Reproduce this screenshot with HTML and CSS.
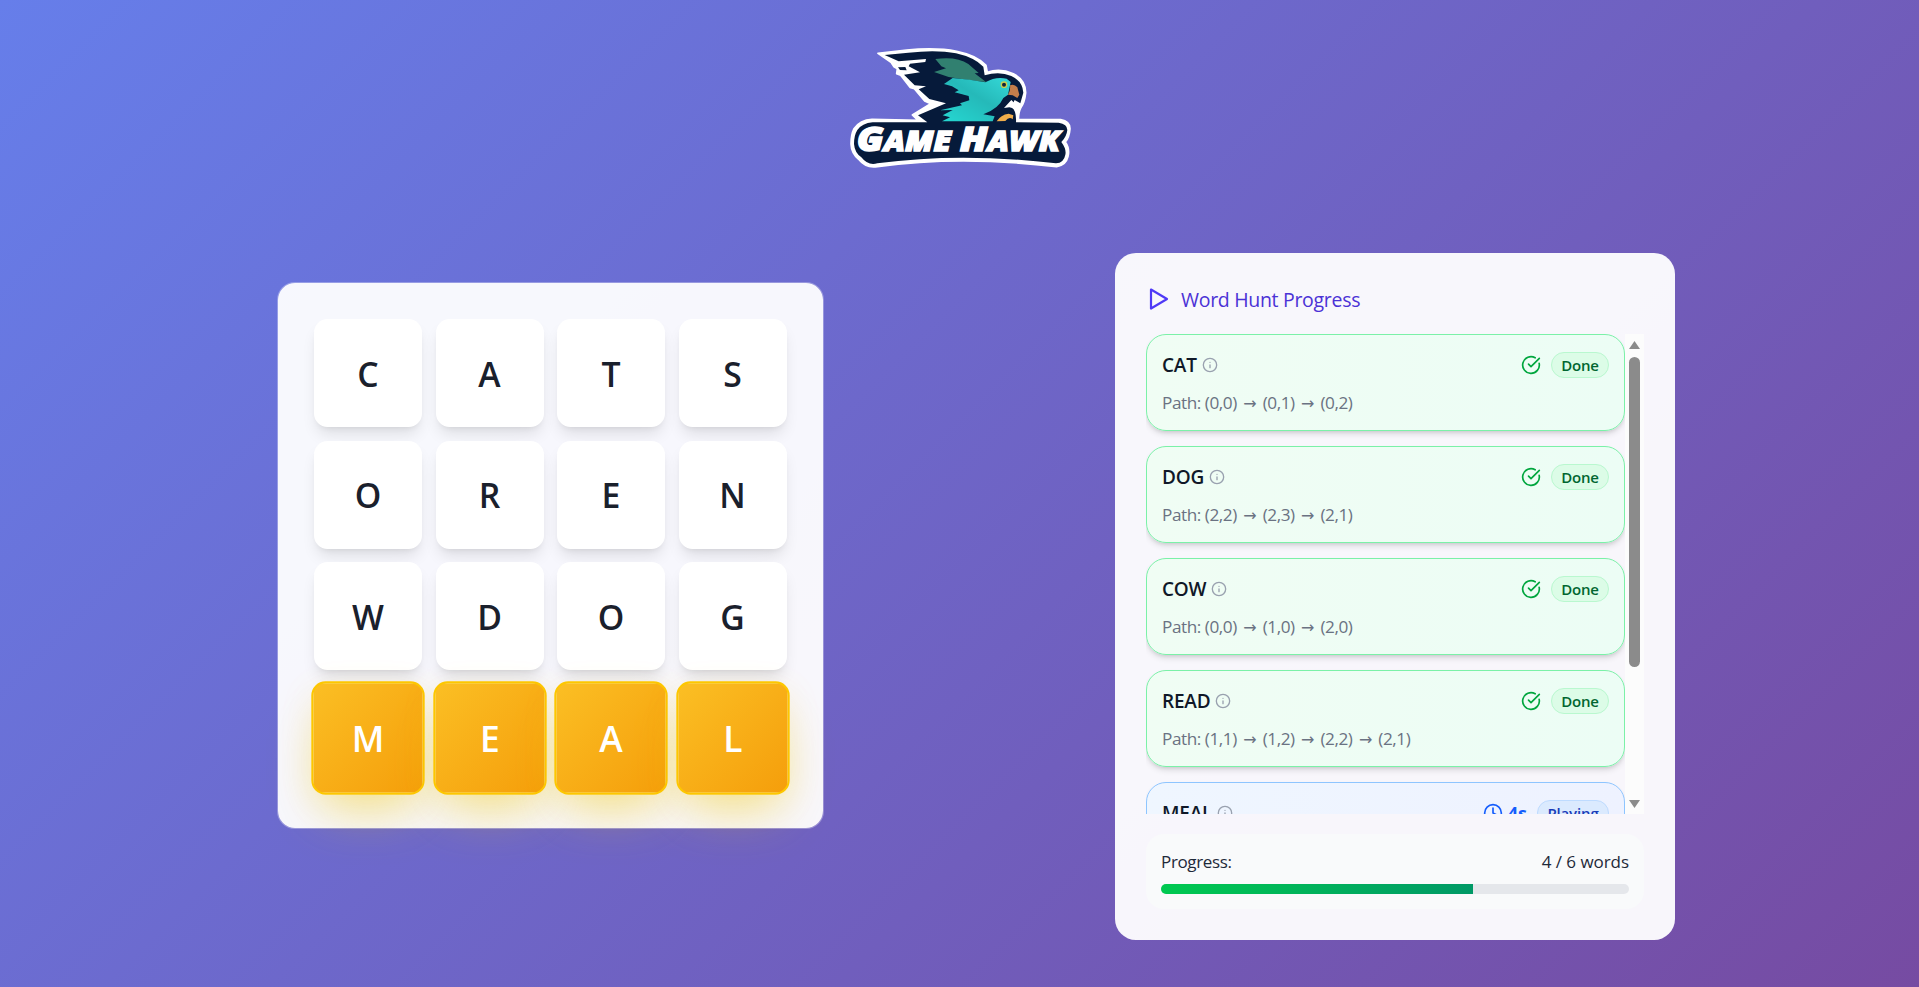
FILE: index.html
```html
<!DOCTYPE html>
<html lang="en">
<head>
<meta charset="utf-8">
<title>Game Hawk</title>
<link rel="stylesheet" href="styles.css">
</head>
<body>
<svg class="defs" width="0" height="0">
  <symbol id="info" viewBox="0 0 24 24"><circle cx="12" cy="12" r="10"/><path d="M12 16v-4M12 8h.01"/></symbol>
  <symbol id="check" viewBox="0 0 24 24"><path d="M21.801 10A10 10 0 1 1 17 3.335"/><path d="m9 11 3 3L22 4"/></symbol>
  <symbol id="clock" viewBox="0 0 24 24"><circle cx="12" cy="12" r="10"/><path d="M12 6v6l4 2"/></symbol>
</svg>
<header class="top">
  <svg class="logo" viewBox="0 0 720 405" role="img" aria-label="Game Hawk">
    <defs><linearGradient id="teal" x1="0" y1="1" x2="1" y2="0"><stop offset="0" stop-color="#25d8d2"/><stop offset=".55" stop-color="#25b9b9"/><stop offset="1" stop-color="#35d9d8"/></linearGradient></defs>
    <path class="halo" d="M114 40L200 30Q290 22 350 34Q410 46 438 76L442 97Q480 84 520 101Q557 120 557 158Q554 188 542 204Q536 214 535 239L662 239Q690 244 690 266Q688 292 676 306Q690 326 684 350Q678 376 650 380Q360 346 112 380Q78 386 56 358Q34 340 33 312Q33 284 42 266Q60 240 96 238L234 241L217 225L272 191L254 183L223 146L210 142L182 106L170 101L172 86L162 80L154 68Z"/>
    <path class="navy" d="M134 45L205 38Q290 28 348 40Q402 52 430 80L434 106Q478 92 514 108Q548 124 550 158L541 190L524 180L514 200Q530 212 528 247L656 248Q682 252 682 270Q680 290 664 306Q680 328 676 344Q672 368 648 370Q360 336 112 370Q84 378 64 352Q44 338 42 312Q42 286 52 270Q66 250 98 247L262 247L234 226L318 190L268 177L236 148L258 139L224 136L192 104L240 97L206 79L210 71L256 66L258 57L176 64Z"/>
    <path class="navy" d="M174 82L196 81L200 91L180 90Z"/>
    <path fill="#318070" d="M286 57Q350 48 385 72L416 99L404 100L438 126Q370 118 326 111L282 96L318 85L304 79Z"/>
    <path fill="url(#teal)" d="M312 132L338 114Q390 118 436 127Q468 108 500 116L512 126L504 164L490 174Q476 206 430 223L464 229L458 244L306 244L330 232L308 226L338 210L300 211L366 196L360 190L388 181L386 168L344 157L356 151L336 139Z"/>
    <path fill="#c47e4b" d="M510 136Q522 130 532 142L538 164L532 174L518 166L504 164Q512 152 510 136Z"/>
    <circle cx="492" cy="134" r="8" fill="#142337" stroke="#c8cf50" stroke-width="4"/>
    <path class="white" d="M492 204L514 180L524 190L542 192L536 206L532 224Q526 204 508 202Z"/>
    <path fill="#efad4b" d="M470 244Q482 224 506 221L520 226L518 238Q508 228 496 243Z"/>
    <g class="word" transform="translate(50 334)">
      <text x="0" y="0" textLength="284" lengthAdjust="spacingAndGlyphs"><tspan class="cap">G</tspan>AME</text>
      <text x="309" y="0" textLength="301" lengthAdjust="spacingAndGlyphs"><tspan class="cap">H</tspan>AWK</text>
    </g>
  </svg>
</header>
<main class="game">
  <section class="board">
    <div class="tile">C</div><div class="tile">A</div><div class="tile">T</div><div class="tile">S</div>
    <div class="tile">O</div><div class="tile">R</div><div class="tile">E</div><div class="tile">N</div>
    <div class="tile">W</div><div class="tile">D</div><div class="tile">O</div><div class="tile">G</div>
    <div class="tile active">M</div><div class="tile active">E</div><div class="tile active">A</div><div class="tile active">L</div>
  </section>
  <aside class="panel">
    <h2 class="title"><svg class="icon play" viewBox="0 0 24 24"><path d="M5 2.5l16 9.5-16 9.5z"/></svg><span>Word Hunt Progress</span></h2>
    <div class="viewport">
      <div class="list">
        <article class="card"><div class="row"><b class="name">CAT</b><svg class="icon info"><use href="#info"/></svg><svg class="icon state"><use href="#check"/></svg><span class="badge">Done</span></div><p class="path">Path: (0,0) <i>→</i> (0,1) <i>→</i> (0,2)</p></article>
        <article class="card"><div class="row"><b class="name">DOG</b><svg class="icon info"><use href="#info"/></svg><svg class="icon state"><use href="#check"/></svg><span class="badge">Done</span></div><p class="path">Path: (2,2) <i>→</i> (2,3) <i>→</i> (2,1)</p></article>
        <article class="card"><div class="row"><b class="name">COW</b><svg class="icon info"><use href="#info"/></svg><svg class="icon state"><use href="#check"/></svg><span class="badge">Done</span></div><p class="path">Path: (0,0) <i>→</i> (1,0) <i>→</i> (2,0)</p></article>
        <article class="card"><div class="row"><b class="name">READ</b><svg class="icon info"><use href="#info"/></svg><svg class="icon state"><use href="#check"/></svg><span class="badge">Done</span></div><p class="path">Path: (1,1) <i>→</i> (1,2) <i>→</i> (2,2) <i>→</i> (2,1)</p></article>
        <article class="card playing"><div class="row"><b class="name">MEAL</b><svg class="icon info"><use href="#info"/></svg><svg class="icon state"><use href="#clock"/></svg><b class="time">4s</b><span class="badge">Playing</span></div></article>
      </div>
      <div class="scroll"><svg width="13" height="10" viewBox="0 0 13 10"><path d="M6.5 1L12 9H1Z"/></svg><div class="thumb"></div><svg class="down" width="13" height="10" viewBox="0 0 13 10"><path d="M1 1H12L6.5 9Z"/></svg></div>
    </div>
    <div class="summary">
      <div class="labels"><span class="plabel">Progress:</span><span class="pcount">4 / 6 words</span></div>
      <div class="bar"><div class="fill" style="width:66.67%"></div></div>
    </div>
  </aside>
</main>
</body>
</html>
```
FILE: styles.css
```css
* { box-sizing: border-box; }
body {
  margin: 0;
  height: 987px;
  overflow: hidden;
  background: linear-gradient(135deg, #667eea 0%, #764ba2 100%);
  font-family: "Segoe UI", "Open Sans", "Noto Sans", sans-serif;
  font-size: 18px;
  color: #1e2939;
}
.defs { position: absolute; }
.top { height: 253px; padding-top: 40px; display: flex; justify-content: center; align-items: flex-start; }
.logo { width: 240px; height: 135px; margin-left: 1px; }
.halo { fill: #fff; stroke: #fff; stroke-width: 5; stroke-linejoin: round; }
.navy { fill: #061a3a; }
.white { fill: #fff; }
.word { fill: #fff; stroke: #fff; stroke-width: 4; font: italic 800 84px "Open Sans", sans-serif; }
.cap { font-size: 103px; }
.game { display: flex; align-items: flex-start; padding-left: 277px; }
.board {
  width: 546.5px;
  margin: 29px 291.5px 0 0;
  padding: 36px;
  border: 1px solid rgba(255,255,255,.3);
  border-radius: 18px;
  background: rgba(255,255,255,.95);
  background-clip: padding-box;
  display: grid;
  grid-template-columns: repeat(4, 108px);
  gap: 13.5px;
}
.tile {
  height: 108px;
  border-radius: 13.5px;
  background: #fff;
  display: flex;
  align-items: center;
  justify-content: center;
  padding-top: 1px;
  font-size: 33.75px;
  font-weight: 600;
  color: #1a202c;
  box-shadow: 0 10px 15px -3px rgba(0,0,0,.1), 0 4px 6px -4px rgba(0,0,0,.1);
}
.active {
  transform: scale(1.05);
  padding: 0;
  color: #fff;
  font-weight: 650;
  border: 2px solid #fdc700;
  background: linear-gradient(135deg, #fbbf24, #f59e0b);
  box-shadow: 0 25px 50px -12px rgba(240,200,0,.45), 0 8px 32px rgba(253,199,0,.1);
}
.panel { width: 560px; height: 687px; padding: 31px; border-radius: 21px; background: rgba(255,255,255,.95); }
.title {
  height: 50px; margin: 0; padding: 0 0 20px 0;
  display: flex; align-items: center; gap: 11px;
  font-size: 19.5px; font-weight: 400; color: #4f39f6;
}
.title span { color: #4b32d6; letter-spacing: -.3px; white-space: nowrap; }
.icon { fill: none; stroke: currentColor; stroke-width: 2; stroke-linecap: round; stroke-linejoin: round; flex: none; }
.play { width: 24px; height: 24px; stroke-width: 2.2; }
.viewport { display: flex; height: 480px; overflow: hidden; }
.list { width: 479px; display: flex; flex-direction: column; gap: 15px; }
.card {
  height: 97px; flex: none; padding: 16px 15px; border: 1px solid #7bf1a8; border-radius: 20px;
  background: linear-gradient(90deg, #f0fdf4, #ecfdf5);
  box-shadow: 0 4px 6px -1px rgba(0,0,0,.12), 0 2px 4px -2px rgba(0,0,0,.14);
}
.row { display: flex; align-items: center; height: 27px; }
.name { font-size: 19px; font-weight: 600; letter-spacing: -.2px; color: #101828; }
.info { width: 16px; height: 16px; margin-left: 5px; color: #99a1af; }
.state { width: 20px; height: 20px; margin-left: auto; margin-right: 10px; color: #00a63e; }
.badge {
  height: 26px; width: 58px; display: flex; align-items: center; justify-content: center;
  border: 1px solid #b9f8cf; border-radius: 13px; background: #dcfce7; color: #016630;
  font-size: 15px; letter-spacing: -.15px; font-weight: 600;
}
.path { margin: 13px 0 0; line-height: 24px; font-size: 17.2px; letter-spacing: -.45px; color: #6a7282; white-space: nowrap; }
.path i { font: 16px/1 "DejaVu Sans", sans-serif; display: inline-block; width: 17.8px; text-align: center; }
.playing { border-color: #8ec5ff; background: linear-gradient(90deg, #eff6ff, #eef2ff); }
.playing .state { color: #155dfc; margin-right: 5px; }
.time { color: #155dfc; font-size: 18px; font-weight: 700; margin-right: 10px; }
.playing .badge { width: 72px; background: #dbeafe; border-color: #bedbff; color: #193cb8; }
.scroll { width: 19px; background: #fcfcfc; display: flex; flex-direction: column; align-items: center; padding: 6px 0 5px; fill: #8b8b8b; }
.thumb { width: 11px; height: 310px; margin-top: 7px; border-radius: 6px; background: #8b8b8b; }
.down { margin-top: auto; }
.summary { margin-top: 20px; height: 75px; padding: 16px 15px; border-radius: 18px; background: #f9fafb; }
.labels { display: flex; justify-content: space-between; height: 34px; line-height: 24px; font-size: 17px; letter-spacing: -.2px; white-space: nowrap; }
.plabel { letter-spacing: -.35px; }
.pcount { letter-spacing: -.05px; }
.bar { height: 10px; border-radius: 5px; overflow: hidden; background: #e5e7eb; }
.fill { height: 100%; background: linear-gradient(90deg, #00c950, #009966); }
```
